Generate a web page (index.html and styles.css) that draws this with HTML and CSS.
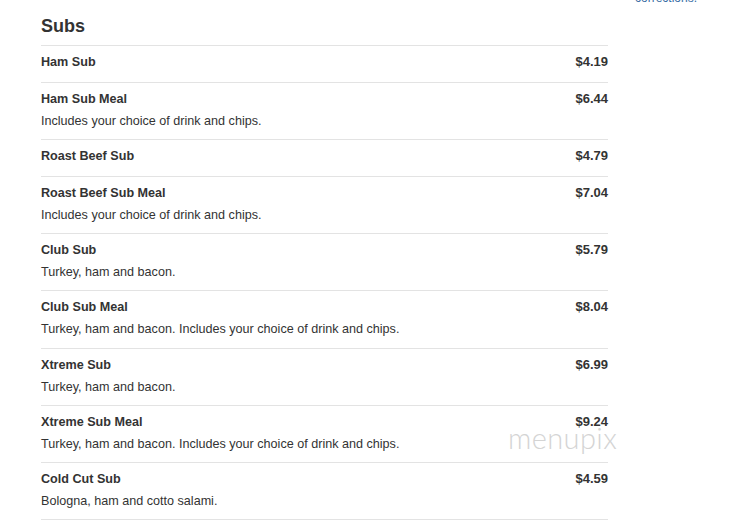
FILE: index.html
```html
<!DOCTYPE html>
<html>
<head>
<meta charset="utf-8">
<link rel="stylesheet" href="styles.css">
</head>
<body>
<div class="page">
  <main class="menu">
    <h2 class="section-title">Subs</h2>
    <div class="item">
      <div class="item-head"><span class="name">Ham Sub</span><span class="price">$4.19</span></div>
    </div>
    <div class="item">
      <div class="item-head"><span class="name">Ham Sub Meal</span><span class="price">$6.44</span></div>
      <div class="desc">Includes your choice of drink and chips.</div>
    </div>
    <div class="item">
      <div class="item-head"><span class="name">Roast Beef Sub</span><span class="price">$4.79</span></div>
    </div>
    <div class="item">
      <div class="item-head"><span class="name">Roast Beef Sub Meal</span><span class="price">$7.04</span></div>
      <div class="desc">Includes your choice of drink and chips.</div>
    </div>
    <div class="item">
      <div class="item-head"><span class="name">Club Sub</span><span class="price">$5.79</span></div>
      <div class="desc">Turkey, ham and bacon.</div>
    </div>
    <div class="item">
      <div class="item-head"><span class="name">Club Sub Meal</span><span class="price">$8.04</span></div>
      <div class="desc">Turkey, ham and bacon. Includes your choice of drink and chips.</div>
    </div>
    <div class="item">
      <div class="item-head"><span class="name">Xtreme Sub</span><span class="price">$6.99</span></div>
      <div class="desc">Turkey, ham and bacon.</div>
    </div>
    <div class="item">
      <div class="item-head"><span class="name">Xtreme Sub Meal</span><span class="price">$9.24</span></div>
      <div class="desc">Turkey, ham and bacon. Includes your choice of drink and chips.</div>
    </div>
    <div class="item">
      <div class="item-head"><span class="name">Cold Cut Sub</span><span class="price">$4.59</span></div>
      <div class="desc">Bologna, ham and cotto salami.</div>
    </div>
    <div class="item"></div>
  </main>
  <aside class="side">
    <a class="side-link" href="#">corrections.</a>
  </aside>
  <div class="watermark">menupix</div>
</div>
</body>
</html>
```
FILE: styles.css
```css
html, body {
  margin: 0;
  padding: 0;
  background: #fff;
}
body {
  font-family: "Liberation Sans", Arial, sans-serif;
  color: #333;
  font-size: 12.6px;
  overflow: hidden;
  height: 522px;
}
.page {
  position: relative;
  display: flex;
  align-items: flex-start;
  padding-left: 41px;
}
.menu {
  width: 567px;
  flex: none;
}
.section-title {
  margin: 0;
  padding-top: 14px;
  font-size: 18px;
  font-weight: bold;
  line-height: 24px;
  height: 31px;
  color: #333;
}
.item {
  border-top: 1px solid #e3e3e3;
  padding: 6px 0 10px;
}
.item-head {
  display: flex;
  justify-content: space-between;
  line-height: 20px;
  font-weight: bold;
}
.price {
  font-size: 13px;
}
.desc {
  line-height: 20px;
  margin-top: 2px;
  margin-bottom: -1.85px;
}
.side {
  margin-left: 27px;
  margin-top: -9px;
}
.side-link {
  font-size: 12px;
  line-height: 14px;
  color: #3a6ea5;
  text-decoration: none;
}
.watermark {
  position: absolute;
  left: 508px;
  top: 420px;
  font-family: Lato, "Open Sans", sans-serif;
  font-weight: 300;
  font-size: 29px;
  letter-spacing: 0.4px;
  color: #d4d4d4;
  line-height: 36px;
}
```
